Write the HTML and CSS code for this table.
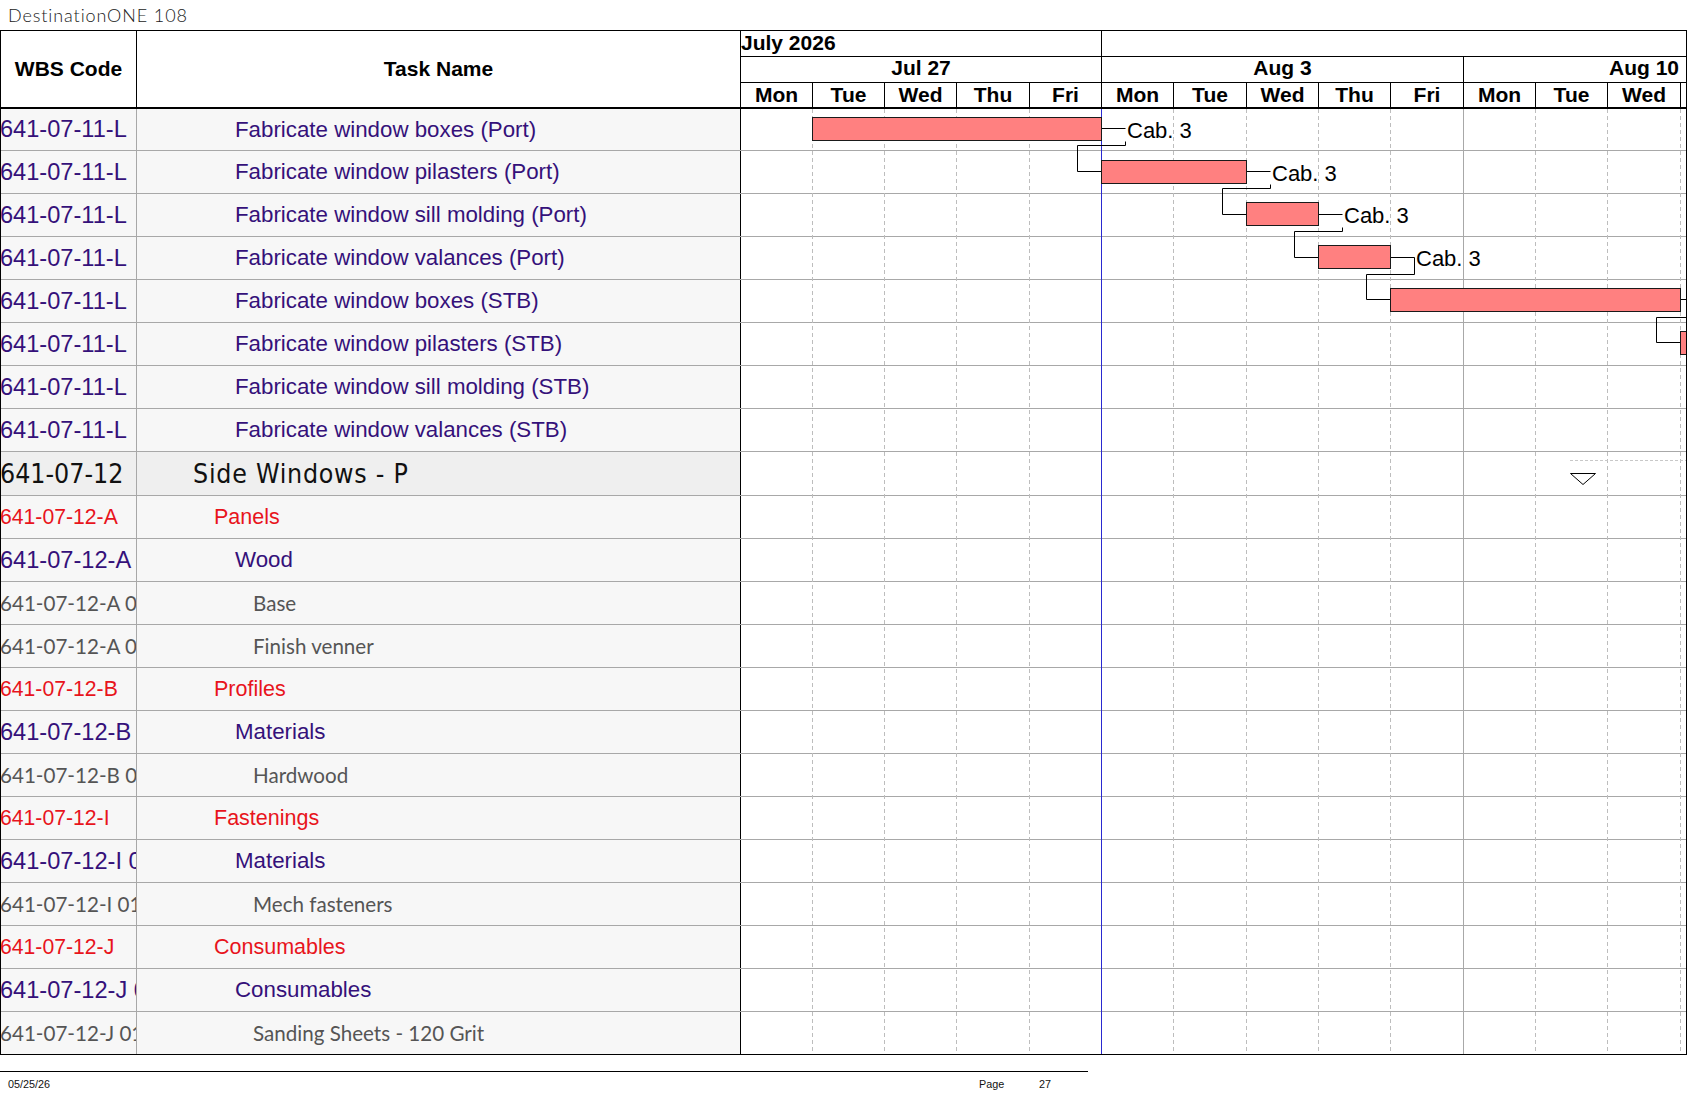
FILE: index.html
```html
<!DOCTYPE html>
<html>
<head>
<meta charset="utf-8">
<title>DestinationONE 108</title>
<link rel="stylesheet" href="styles.css">
</head>
<body>
<div class="title">DestinationONE 108</div>
<div class="gantt">
  <div class="head">
    <div class="hwbs">WBS Code</div>
    <div class="htask">Task Name</div>
    <div class="hchart">
      <div class="months"><div class="mcell">July 2026</div><div class="mcell last"></div></div>
      <div class="weeks"><div class="wcell">Jul 27</div><div class="wcell">Aug 3</div><div class="wcell last right">Aug 10</div></div>
      <div class="days">
        <div class="dcell">Mon</div><div class="dcell">Tue</div><div class="dcell">Wed</div><div class="dcell">Thu</div><div class="dcell">Fri</div>
        <div class="dcell">Mon</div><div class="dcell">Tue</div><div class="dcell">Wed</div><div class="dcell">Thu</div><div class="dcell">Fri</div>
        <div class="dcell">Mon</div><div class="dcell">Tue</div><div class="dcell">Wed</div><div class="dcell last"></div>
      </div>
    </div>
  </div>
  <div class="body">
    <div class="row first l2"><div class="wbs"><span>641-07-11-L</span></div><div class="task">Fabricate window boxes (Port)</div><div class="chart"></div></div>
    <div class="row l2"><div class="wbs"><span>641-07-11-L</span></div><div class="task">Fabricate window pilasters (Port)</div><div class="chart"></div></div>
    <div class="row l2"><div class="wbs"><span>641-07-11-L</span></div><div class="task">Fabricate window sill molding (Port)</div><div class="chart"></div></div>
    <div class="row l2"><div class="wbs"><span>641-07-11-L</span></div><div class="task">Fabricate window valances (Port)</div><div class="chart"></div></div>
    <div class="row l2"><div class="wbs"><span>641-07-11-L</span></div><div class="task">Fabricate window boxes (STB)</div><div class="chart"></div></div>
    <div class="row l2"><div class="wbs"><span>641-07-11-L</span></div><div class="task">Fabricate window pilasters (STB)</div><div class="chart"></div></div>
    <div class="row l2"><div class="wbs"><span>641-07-11-L</span></div><div class="task">Fabricate window sill molding (STB)</div><div class="chart"></div></div>
    <div class="row l2"><div class="wbs"><span>641-07-11-L</span></div><div class="task">Fabricate window valances (STB)</div><div class="chart"></div></div>
    <div class="row sum l0"><div class="wbs"><span>641-07-12</span></div><div class="task">Side Windows - P</div><div class="chart"></div></div>
    <div class="row l1"><div class="wbs"><span>641-07-12-A</span></div><div class="task">Panels</div><div class="chart"></div></div>
    <div class="row l2"><div class="wbs"><span>641-07-12-A</span></div><div class="task">Wood</div><div class="chart"></div></div>
    <div class="row l3"><div class="wbs"><span>641-07-12-A 01 01</span></div><div class="task">Base</div><div class="chart"></div></div>
    <div class="row l3"><div class="wbs"><span>641-07-12-A 01 02</span></div><div class="task">Finish venner</div><div class="chart"></div></div>
    <div class="row l1"><div class="wbs"><span>641-07-12-B</span></div><div class="task">Profiles</div><div class="chart"></div></div>
    <div class="row l2"><div class="wbs"><span>641-07-12-B</span></div><div class="task">Materials</div><div class="chart"></div></div>
    <div class="row l3"><div class="wbs"><span>641-07-12-B 01 01</span></div><div class="task">Hardwood</div><div class="chart"></div></div>
    <div class="row l1"><div class="wbs"><span>641-07-12-I</span></div><div class="task">Fastenings</div><div class="chart"></div></div>
    <div class="row l2"><div class="wbs"><span>641-07-12-I 01</span></div><div class="task">Materials</div><div class="chart"></div></div>
    <div class="row l3"><div class="wbs"><span>641-07-12-I 01 01</span></div><div class="task">Mech fasteners</div><div class="chart"></div></div>
    <div class="row l1"><div class="wbs"><span>641-07-12-J</span></div><div class="task">Consumables</div><div class="chart"></div></div>
    <div class="row l2"><div class="wbs"><span>641-07-12-J 01</span></div><div class="task">Consumables</div><div class="chart"></div></div>
    <div class="row l3"><div class="wbs"><span>641-07-12-J 01 01</span></div><div class="task">Sanding Sheets - 120 Grit</div><div class="chart"></div></div>

    <svg class="overlay" viewBox="741 109 945 945" width="945" height="945" xmlns="http://www.w3.org/2000/svg">
      <g class="gdash">
        <line x1="812.5" y1="109" x2="812.5" y2="1054"/>
        <line x1="884.5" y1="109" x2="884.5" y2="1054"/>
        <line x1="956.5" y1="109" x2="956.5" y2="1054"/>
        <line x1="1029.5" y1="109" x2="1029.5" y2="1054"/>
        <line x1="1173.5" y1="109" x2="1173.5" y2="1054"/>
        <line x1="1246.5" y1="109" x2="1246.5" y2="1054"/>
        <line x1="1318.5" y1="109" x2="1318.5" y2="1054"/>
        <line x1="1390.5" y1="109" x2="1390.5" y2="1054"/>
        <line x1="1535.5" y1="109" x2="1535.5" y2="1054"/>
        <line x1="1607.5" y1="109" x2="1607.5" y2="1054"/>
        <line x1="1680.5" y1="109" x2="1680.5" y2="1054"/>
      </g>
      <line class="gweek" x1="1463.5" y1="109" x2="1463.5" y2="1054"/>
      <line class="gstatus" x1="1101.5" y1="109" x2="1101.5" y2="1054"/>

      <g class="links">
        <path d="M1101.5 128.5 H1125.5 M1125.5 141.5 V145.5 H1077.5 V171.5 H1101.5"/>
        <path d="M1246.5 171.5 H1270.5 M1270.5 184.5 V188.5 H1222.5 V214.5 H1246.5"/>
        <path d="M1318.5 214.5 H1342.5 M1342.5 227.5 V231.5 H1294.5 V257.5 H1318.5"/>
        <path d="M1390.5 257.5 H1414.5 V274.5 H1366.5 V299.5 H1390.5"/>
        <path d="M1680.5 299.5 H1700 M1700 317.5 H1656.5 V342.5 H1680.5"/>
      </g>
      <g class="bars">
        <rect x="812.5" y="117.5" width="289" height="23"/>
        <rect x="1101.5" y="160.5" width="145" height="23"/>
        <rect x="1246.5" y="202.5" width="72" height="23"/>
        <rect x="1318.5" y="245.5" width="72" height="23"/>
        <rect x="1390.5" y="288.5" width="290" height="23"/>
        <rect x="1680.5" y="331.5" width="100" height="23"/>
      </g>
      <g class="labels">
        <text x="1127" y="137.5">Cab. 3</text>
        <text x="1272" y="180.5">Cab. 3</text>
        <text x="1344" y="223">Cab. 3</text>
        <text x="1416" y="266">Cab. 3</text>
      </g>
      <line class="sumdash" x1="1570" y1="460.5" x2="1686" y2="460.5"/>
      <polygon class="sumtri" points="1570.5,473.5 1595.5,473.5 1583,484.5"/>
    </svg>
  </div>
</div>
<div class="footer">
  <span>05/25/26</span>
  <span>Page</span>
  <span>27</span>
</div>
</body>
</html>
```

FILE: styles.css
```css
* { box-sizing: border-box; }

body {
  margin: 0;
  background: #ffffff;
  font-family: "Liberation Sans", Arial, sans-serif;
  color: #000;
}

.title {
  height: 30px;
  line-height: 30px;
  padding-left: 8px;
  font-family: Lato, "DejaVu Sans", sans-serif;
  font-weight: 300;
  font-size: 18px;
  letter-spacing: 0.9px;
  color: #1a1a1a;
}

.gantt {
  width: 1687px;
  border: 1px solid #000;
  border-bottom: none;
}

/* header */
.head {
  display: grid;
  grid-template-columns: 136px 604px 945px;
  height: 78px;
}

.hwbs, .htask {
  display: flex;
  align-items: center;
  justify-content: center;
  font-weight: bold;
  font-size: 21px;
  border-right: 1px solid #000;
  border-bottom: 2px solid #000;
}

.hchart {
  display: grid;
  grid-template-rows: 26px 26px 26px;
}

.months, .weeks, .days {
  display: grid;
  font-weight: bold;
  font-size: 21px;
}

.months {
  grid-template-columns: 361px 1fr;
  border-bottom: 1px solid #000;
}

.weeks {
  grid-template-columns: 361px 362px 1fr;
  border-bottom: 1px solid #000;
}

.days {
  grid-template-columns: 72px 72px 72px 73px 72px 72px 73px 72px 72px 73px 72px 72px 73px 1fr;
  border-bottom: 2px solid #000;
}

.mcell, .wcell, .dcell {
  border-right: 1px solid #000;
  display: flex;
  align-items: center;
  white-space: nowrap;
  overflow: hidden;
}

.mcell { line-height: 24px; padding-bottom: 2px; }

.wcell { justify-content: center; padding-bottom: 3px; }
.dcell { justify-content: center; padding-bottom: 1px; }

.wcell.right { justify-content: flex-end; padding-right: 7px; }

.mcell.last, .wcell.last, .dcell.last { border-right: none; }

/* body rows */
.body {
  position: relative;
}

.row {
  display: grid;
  grid-template-columns: 136px 604px 945px;
  height: 43px;
  border-bottom: 1px solid #a8a8a8;
}

.row.first { height: 42px; }
.row.sum { height: 44px; }
.row:nth-last-child(2) { border-bottom-color: #000; }

.wbs {
  display: flex;
  align-items: center;
  white-space: nowrap;
  overflow: hidden;
  background: #f7f7f7;
  border-right: 1px solid #a8a8a8;
  padding-right: 1px;
}

.wbs span { margin-left: -1px; }

.task {
  display: flex;
  align-items: center;
  white-space: nowrap;
  overflow: hidden;
  background: #f7f7f7;
  border-right: 1px solid #000;
}

.chart { background: #ffffff; }

.l2 .wbs, .l2 .task { color: #35117a; }
.l2 .wbs { font-size: 23.6px; }
.l2 .task { font-size: 22.3px; padding-left: 98px; }

.l1 .wbs, .l1 .task { color: #e8141c; }
.l1 .wbs { font-size: 21.2px; }
.l1 .task { font-size: 21.5px; padding-left: 77px; }

.l0 .wbs, .l0 .task {
  color: #111;
  font-family: "DejaVu Sans Condensed", "DejaVu Sans", sans-serif;
  font-stretch: condensed;
  font-size: 26.5px;
  background: #efefef;
}
.l0 .task { padding-left: 56px; letter-spacing: 0.75px; }

.l3 .wbs, .l3 .task {
  color: #555;
  font-family: Lato, "Open Sans", sans-serif;
  font-size: 20.6px;
}
.l3 .task { padding-left: 116px; }

/* gantt overlay */
.overlay {
  position: absolute;
  left: 740px;
  top: 0;
  overflow: hidden;
}

.gdash line {
  stroke: #bdbdbd;
  stroke-width: 1;
  stroke-dasharray: 4 3;
}

.gweek { stroke: #a8a8a8; stroke-width: 1; }
.gstatus { stroke: #2a2ad0; stroke-width: 1; }

.links path {
  fill: none;
  stroke: #000;
  stroke-width: 1;
}

.bars rect {
  fill: #ff8080;
  stroke: #1a1a1a;
  stroke-width: 1;
}

.labels text {
  font-family: "Liberation Sans", Arial, sans-serif;
  font-size: 22px;
  fill: #000;
}

.sumdash {
  stroke: #c8c8c8;
  stroke-width: 1;
  stroke-dasharray: 3 2;
}

.sumtri {
  fill: #fff;
  stroke: #000;
  stroke-width: 1;
}

/* footer */
.footer {
  width: 1088px;
  margin-top: 16px;
  border-top: 1px solid #000;
  display: grid;
  grid-template-columns: 971px 60px auto;
  padding: 6px 0 0 8px;
  font-size: 10.8px;
  line-height: 12px;
  color: #111;
}
```
